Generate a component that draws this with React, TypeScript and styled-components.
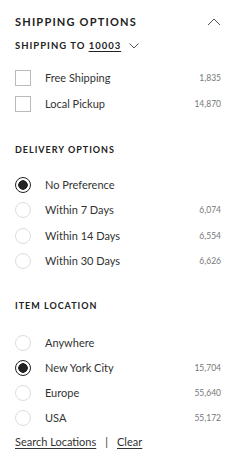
import React from "react";
import styled, { createGlobalStyle } from "styled-components";

const Global = createGlobalStyle`
  body {
    margin: 0;
    background: #fff;
    font-family: "Lato", "Liberation Sans", sans-serif;
    color: #333;
  }
`;

interface iOption {
  label: string;
  count?: string;
  checked?: boolean;
}

const shipping: iOption[] = [
  { label: "Free Shipping", count: "1,835" },
  { label: "Local Pickup", count: "14,870" },
];

const delivery: iOption[] = [
  { label: "No Preference", checked: true },
  { label: "Within 7 Days", count: "6,074" },
  { label: "Within 14 Days", count: "6,554" },
  { label: "Within 30 Days", count: "6,626" },
];

const location: iOption[] = [
  { label: "Anywhere" },
  { label: "New York City", count: "15,704", checked: true },
  { label: "Europe", count: "55,640" },
  { label: "USA", count: "55,172" },
];

const Chevron = ({ up }: { up?: boolean }) => (
  <svg width="14" height="8" viewBox="0 0 14 8" fill="none">
    <path
      d={up ? "M1 7L7 1L13 7" : "M1 1L7 7L13 1"}
      stroke="#555"
      strokeWidth="1"
    />
  </svg>
);

const App: React.FC = () => {
  return (
    <Panel>
      <Global />
      <TopBar>
        <Title>Shipping Options</Title>
        <Chevron up />
      </TopBar>
      <ShipTo>
        Shipping to <Zip>10003</Zip>
        <SmallChev>
          <svg width="10" height="6" viewBox="0 0 10 6" fill="none">
            <path d="M0.5 0.5L5 5L9.5 0.5" stroke="#555" strokeWidth="1" />
          </svg>
        </SmallChev>
      </ShipTo>
      <List $top={18} $gap={10}>
        {shipping.map((o) => (
          <Row key={o.label}>
            <Box />
            <Label>{o.label}</Label>
            <Count>{o.count}</Count>
          </Row>
        ))}
      </List>

      <Heading $top={32}>Delivery Options</Heading>
      <List $top={21} $gap={9.3}>
        {delivery.map((o) => (
          <Row key={o.label}>
            <Radio $on={o.checked} />
            <Label>{o.label}</Label>
            <Count>{o.count}</Count>
          </Row>
        ))}
      </List>

      <Heading $top={31}>Item Location</Heading>
      <List $top={23} $gap={9}>
        {location.map((o) => (
          <Row key={o.label}>
            <Radio $on={o.checked} />
            <Label>{o.label}</Label>
            <Count>{o.count}</Count>
          </Row>
        ))}
      </List>
      <Links>
        <A>Search Locations</A>
        <Sep>|</Sep>
        <A>Clear</A>
      </Links>
    </Panel>
  );
};
export default App;

const Panel = styled.div`
  width: 241px;
  height: 460px;
  box-sizing: border-box;
  padding: 15px 20px 0 15px;
`;
const TopBar = styled.div`
  display: flex;
  justify-content: space-between;
  align-items: center;
  height: 14px;
  line-height: 14px;
`;
const Title = styled.div`
  font-size: 11px;
  font-weight: 700;
  letter-spacing: 1.2px;
  text-transform: uppercase;
  color: #222;
`;
const ShipTo = styled.div`
  display: flex;
  align-items: center;
  height: 12px;
  line-height: 12px;
  margin-top: 11px;
  font-size: 9.5px;
  font-weight: 700;
  letter-spacing: 1px;
  text-transform: uppercase;
  color: #222;
  white-space: pre;
`;
const Zip = styled.span`
  text-decoration: underline;
  text-decoration-thickness: 1px;
  text-underline-offset: 2px;
`;
const SmallChev = styled.span`
  display: inline-flex;
  margin-left: 8px;
`;
const List = styled.div<{ $top: number; $gap: number }>`
  display: flex;
  flex-direction: column;
  gap: ${(p) => p.$gap}px;
  margin-top: ${(p) => p.$top}px;
`;
const Row = styled.div`
  display: flex;
  align-items: center;
  height: 16px;
`;
const Box = styled.span`
  width: 16px;
  height: 16px;
  box-sizing: border-box;
  border: 1px solid #bbb;
`;
const Radio = styled.span<{ $on?: boolean }>`
  width: 16px;
  height: 16px;
  box-sizing: border-box;
  border-radius: 50%;
  border: ${(p) => (p.$on ? "1.5px solid #222" : "1px solid #ddd")};
  background: ${(p) =>
    p.$on ? "radial-gradient(circle, #222 0 4.5px, #fff 5px)" : "#fff"};
`;
const Label = styled.span`
  flex: 1;
  margin-left: 14px;
  font-size: 11px;
  line-height: 16px;
  color: #333;
`;
const Count = styled.span`
  font-size: 8.5px;
  color: #777;
`;
const Heading = styled.div<{ $top: number }>`
  margin-top: ${(p) => p.$top}px;
  height: 12px;
  line-height: 12px;
  font-size: 9px;
  font-weight: 700;
  letter-spacing: 1px;
  text-transform: uppercase;
  color: #222;
`;
const Links = styled.div`
  display: flex;
  align-items: center;
  gap: 9px;
  height: 12px;
  line-height: 12px;
  margin-top: 10px;
  font-size: 11px;
  color: #333;
`;
const A = styled.span`
  text-decoration: underline;
  text-underline-offset: 2px;
`;
const Sep = styled.span`
  text-decoration: underline;
`;
